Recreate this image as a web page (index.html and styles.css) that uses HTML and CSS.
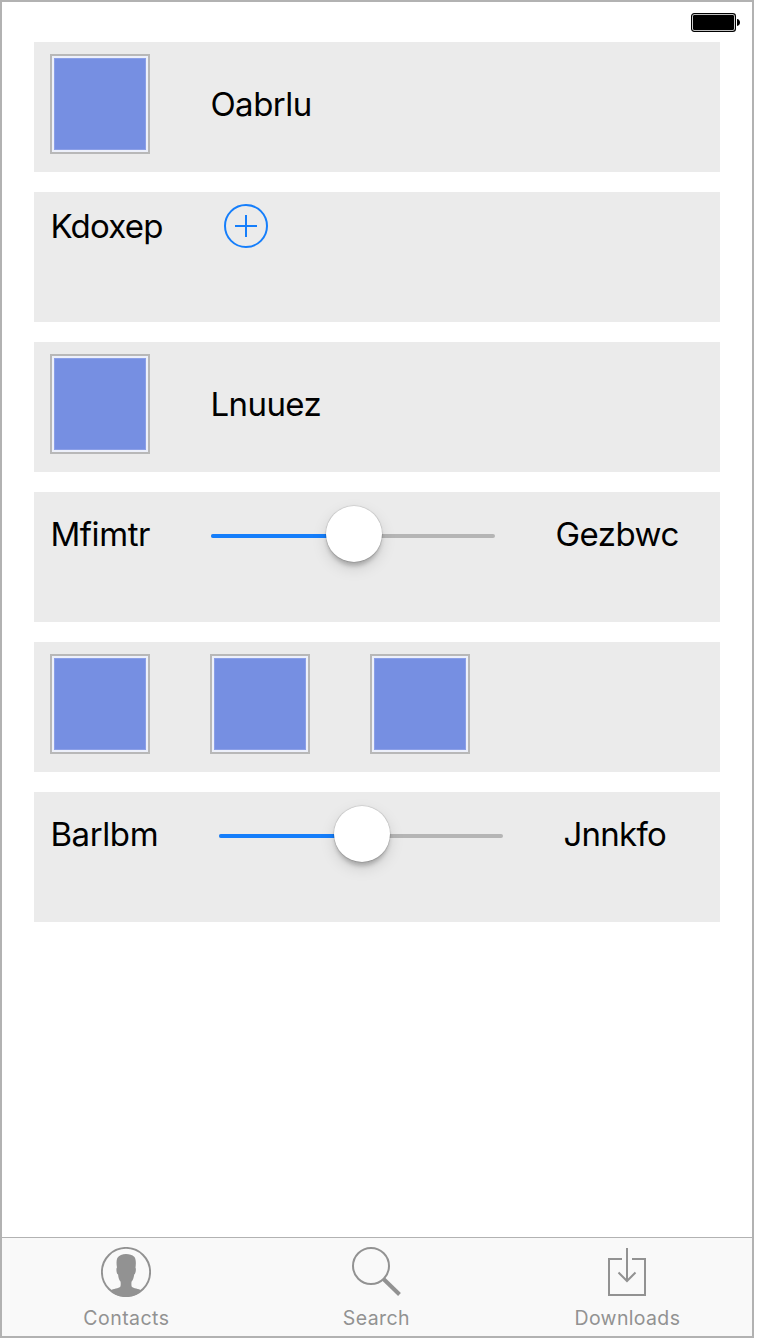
FILE: index.html
```html
<!DOCTYPE html>
<html lang="en">
<head>
<meta charset="utf-8">
<title>Contacts</title>
<link rel="stylesheet" href="styles.css">
</head>
<body>
<div class="phone">
  <header class="status">
    <svg width="50" height="20" viewBox="0 0 50 20"><rect x=".6" y=".6" width="43.8" height="17.8" rx="2.6" fill="#fff" stroke="#000" stroke-width="1.2"/><rect x="2" y="2" width="41" height="15" rx="1.3"/><path d="M46 6c4 .3 4 6.700 0 7z"/></svg>
  </header>
  <main class="rows">
    <section class="row"><div class="swatch"></div><span class="label oabrlu">Oabrlu</span></section>
    <section class="row top"><span class="label kdoxep">Kdoxep</span>
      <svg class="add" width="48" height="44" viewBox="0 0 48 44" fill="none" stroke="#157efb" stroke-width="2"><circle cx="24" cy="22" r="21"/><path d="M13 22h22M24 11v22"/></svg>
    </section>
    <section class="row"><div class="swatch"></div><span class="label lnuuez">Lnuuez</span></section>
    <section class="row range"><span class="label mfimtr">Mfimtr</span><div class="slider"><div class="fill"></div><div class="knob"></div></div><span class="label gezbwc">Gezbwc</span></section>
    <section class="row"><div class="swatch"></div><div class="swatch"></div><div class="swatch"></div></section>
    <section class="row range"><span class="label barlbm">Barlbm</span><div class="slider"><div class="fill"></div><div class="knob"></div></div><span class="label jnnkfo">Jnnkfo</span></section>
  </main>
  <nav class="tabs">
    <div class="tab">
      <svg width="50" height="50" viewBox="0 0 50 50"><circle cx="25" cy="25" r="24.100" fill="none" stroke="#929292" stroke-width="1.900"/><path fill="#929292" d="M9.500 43.500C12 41.500 18 41.500 19.300 39.700c.6-1.200.4-3.500.3-5-1.700-2-2.200-4-2.500-7.200-1.500-.3-2-4.500-1.500-6.500l.4-.4c-.6-3-.8-7 .3-9.500C18 8 21.500 7 25 7s6 .7 8.500 3c1.700 2.500 1.500 7 1 10.700.8.500.3 6.300-1.300 6.800-.4 3-1 5.300-2.700 7.200-.1 1.500-.3 3.800.3 5 1.300 1.800 7.200 1.800 9.700 3.800C36 48 31 50 25 50S14 48 9.500 43.500z"/></svg>
      <span class="name contacts">Contacts</span>
    </div>
    <div class="tab">
      <svg width="50" height="50" viewBox="0 0 50 50" fill="none" stroke="#929292"><circle cx="20" cy="19" r="18" stroke-width="2"/><path d="M32.500 32 48.500 47.500" stroke-width="4"/></svg>
      <span class="name search">Search</span>
    </div>
    <div class="tab">
      <svg width="50" height="50" viewBox="0 0 50 50" fill="none" stroke="#929292" stroke-width="2"><path d="M20 12H7v36h36V12H30M25 1v33M16.500 25.500 25 34l8.500-8.500"/></svg>
      <span class="name downloads">Downloads</span>
    </div>
  </nav>
</div>
</body>
</html>
```
FILE: styles.css
```css
* { box-sizing: border-box; }
body { margin: 0; background: #fff; font-family: Inter, "Liberation Sans", sans-serif; }
svg { display: block; flex: none; }
.phone { width: 754px; height: 1338px; border: 2px solid #b2b2b2; display: flex; flex-direction: column; }
.status { height: 40px; padding: 11px 0 0 689px; }
.rows { flex: 1; padding: 0 32px; display: flex; flex-direction: column; gap: 20px; }
.row { width: 686px; height: 130px; padding: 12px 16px; background: #ebebeb; display: flex; align-items: flex-start; gap: 60px; }
.swatch { width: 100px; height: 100px; flex: none; border: 2px solid #b8b8b8; background: #768fe2; box-shadow: inset 0 0 0 2px #edf0fa, inset 0 0 0 3px #8b9fe7; }
.label { font-size: 33px; line-height: 40px; white-space: nowrap; color: #000; flex: none; margin-top: 30px; text-indent: .4px; }
.top .label { margin-top: 2px; }
.range .label { margin-top: 10px; }
.oabrlu { width: 102px; letter-spacing: -.5px; }
.kdoxep { width: 112px; letter-spacing: -.75px; }
.lnuuez { width: 112px; letter-spacing: -.55px; }
.mfimtr { width: 101px; letter-spacing: -.4px; }
.gezbwc { width: 124px; letter-spacing: -.5px; }
.barlbm { width: 109px; letter-spacing: -.4px; }
.jnnkfo { width: 104px; letter-spacing: -.7px; }
.slider { position: relative; width: 284px; height: 4px; margin-top: 30px; border-radius: 2px; background: #b5b5b5; flex: none; }
.fill { width: 50%; height: 4px; border-radius: 2px; background: #157efb; }
.knob { position: absolute; left: 115px; top: -28px; width: 56px; height: 56px; border-radius: 50%; background: #fff; box-shadow: 0 0 1px 0.500px rgba(0,0,0,.18), 0 5px 4px -1px rgba(0,0,0,.2), 0 6px 15px rgba(0,0,0,.13); }
.tabs { height: 99px; border-top: 1px solid #b2b2b2; background: #f9f9f9; display: grid; grid-template-columns: 248px 252px 250px; }
.tab { display: flex; flex-direction: column; align-items: center; padding-top: 9px; }
.name { font-size: 19.500px; line-height: 24px; margin-top: 9px; letter-spacing: .45px; text-indent: .8px; color: #929292; white-space: nowrap; }
.downloads { letter-spacing: .35px; }
```
